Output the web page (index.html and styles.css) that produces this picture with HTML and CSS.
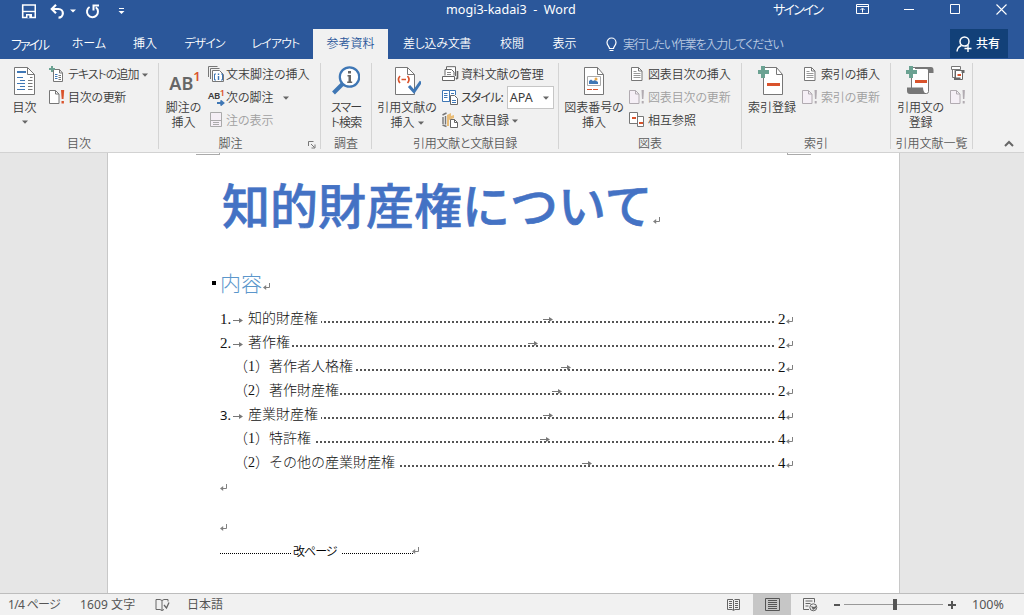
FILE: index.html
```
<!DOCTYPE html>
<html lang="ja">
<head>
<meta charset="utf-8">
<title>mogi3-kadai3 - Word</title>
<link rel="stylesheet" href="styles.css">
</head>
<body>
<svg class="defs" width="0" height="0">
  <symbol id="ret" viewBox="0 0 8 8"><path d="M6.500 0v4.500H2" fill="none" stroke="#808080"/><path d="M0 4.500L3.200 2v5z" fill="#808080"/></symbol>
  <symbol id="tab" viewBox="0 0 10 6"><path d="M0 2.500h7" stroke="#777" fill="none"/><path d="M6 0L10 2.500 6 5z" fill="#777"/></symbol>
  <symbol id="caret" viewBox="0 0 6 4"><path d="M0 .5h6L3 3.700z" fill="#666"/></symbol>
  <symbol id="update" viewBox="0 0 16 16"><path d="M.5 1.500h6l3.500 3.500v9.500H.5z" fill="#fff" stroke="#777"/><path d="M6.500 1.500V5H10" fill="none" stroke="#777"/><path d="M12 1h3.200l-.7 9h-1.800z" fill="#d9532c"/><path d="M12.500 12h2.400v2.500h-2.400z" fill="#d9532c"/></symbol>
  <symbol id="update-off" viewBox="0 0 16 16"><path d="M.5 1.500h6l3.500 3.500v9.500H.5z" fill="#f5eff6" stroke="#b1abb1"/><path d="M6.500 1.500V5H10" fill="none" stroke="#b1abb1"/><path d="M12.500 1h2.400l-.5 9h-1.400z" fill="#b1abb1"/><path d="M12.700 12h2v2.500h-2z" fill="#b1abb1"/></symbol>
  <symbol id="list" viewBox="0 0 16 16"><path d="M2.500 1.500h7l3.500 3.500v9.500H2.500z" fill="#fff" stroke="#777"/><path d="M9.500 1.500V5H13" fill="none" stroke="#777"/><path d="M4.500 5.500h3M4.500 7.500h7M4.500 9.500h7M4.500 11.500h7" fill="none" stroke="#999"/></symbol>
</svg>

<header class="top">
  <div class="titlebar">
    <div class="quick">
      <svg class="q-save" width="15" height="15"><path d="M1.700 1h12.600v12.500H1.700z" fill="none" stroke="#fff" stroke-width="1.600"/><path d="M2 7.500h12" stroke="#fff" stroke-width="1.400"/><path d="M5 10h6v4H5z" fill="#fff"/><path d="M6.500 11.500h1.800v2.500H6.500z" fill="#2b579a"/></svg>
      <svg class="q-undo" width="16" height="15"><path d="M2 5h6.500a4.300 4.300 0 0 1 0 8.700" fill="none" stroke="#fff" stroke-width="2.200"/><path d="M6 .8L1.800 5 6 9.200" fill="none" stroke="#fff" stroke-width="2.200"/></svg>
      <svg class="q-caret" width="6" height="4"><path d="M0 .5h6L3 3.500z" fill="#fff"/></svg>
      <svg class="q-redo" width="15" height="15"><path d="M4.600 3A5.500 5.500 0 1 0 10.800 3.300" fill="none" stroke="#fff" stroke-width="2"/><path d="M8.500 6.500V1.500H14" fill="none" stroke="#fff" stroke-width="2"/></svg>
      <svg class="q-more" width="7" height="8"><path d="M1 1.500h5" stroke="#fff"/><path d="M.5 4h6l-3 3z" fill="#fff"/></svg>
    </div>
    <div class="title">mogi3-kadai3&nbsp; -&nbsp; Word</div>
    <div class="signin">サインイン</div>
    <svg class="w-ribbon" width="13" height="11"><path d="M.5.5h12v9H.5zM.5 2.500h12M6.500 8.500v-4M4.500 6l2-2 2 2" fill="none" stroke="#fff"/></svg>
    <svg class="w-min" width="10" height="11"><path d="M0 5.500h10" stroke="#fff"/></svg>
    <svg class="w-max" width="10" height="11"><path d="M.5.5h9v9h-9z" fill="none" stroke="#fff"/></svg>
    <svg class="w-close" width="11" height="11"><path d="M.5.5l10 10M10.500.5l-10 10" stroke="#fff" stroke-width="1.100"/></svg>
  </div>
  <nav class="tabs">
    <span class="tight file">ファイル</span><span>ホーム</span><span>挿入</span><span class="tight">デザイン</span><span class="tight">レイアウト</span><span class="active">参考資料</span><span class="semi">差し込み文書</span><span>校閲</span><span>表示</span>
    <div class="tell"><svg width="11" height="16"><path d="M3.500 11.500c0-2-2.500-3-2.500-6a4.500 4.500 0 0 1 9 0c0 3-2.500 4-2.500 6zM3.500 13.500h4" fill="none" stroke="#fff" stroke-width="1.200"/></svg><span>実行したい作業を入力してください</span></div>
    <div class="share"><svg width="16" height="16"><circle cx="8.500" cy="5.500" r="4.500" fill="none" stroke="#fff" stroke-width="1.500"/><path d="M1 15.500c.3-3.500 2-5 4.500-6M9.500 9.500l1 1M8.500 12.500h7M12 9v7" fill="none" stroke="#fff" stroke-width="1.400"/></svg><span>共有</span></div>
  </nav>
</header>

<section class="ribbon">
  <div class="group g1">
    <div class="tools">
      <div class="big b1"><svg width="22" height="30"><path d="M.5 1.500h13l7 7V28.500H.5z" fill="#fff" stroke="#777"/><path d="M13.500 1.500v7h7" fill="none" stroke="#777"/><path d="M3 6h9" stroke="#3f77b5" stroke-width="2"/><path d="M3 11.500h6M6 14.500h5M3 17.500h8M6 20.500h5M3 23.500h8" stroke="#3f77b5"/><path d="M16 11.500h2.500M14 14.500h4.500M14 17.500h4.500M14 20.500h4.500M14 23.500h4.500" stroke="#777"/></svg><span>目次</span><svg class="caret" width="6" height="4"><use href="#caret"/></svg></div>
      <div class="smalls">
        <div class="row"><svg width="16" height="16"><path d="M4.500 3.500h6l3 3.500v8.500h-9z" fill="#fff" stroke="#777"/><path d="M10.500 3.500V7h3" fill="none" stroke="#777"/><path d="M6 8.500h2.500M6 10.500h2.500M6 12.500h2.500" stroke="#3f77b5"/><path d="M9.500 9.500H12M9.500 11.500H12M9.500 13.500H12" stroke="#777"/><path d="M2 0h2v2h2v2H4v2H2V4H0V2h2z" fill="#6ba292"/></svg><span class="add">テキストの追加</span><svg class="caret" width="6" height="4"><use href="#caret"/></svg></div>
        <div class="row"><svg width="16" height="16"><use href="#update"/></svg><span class="semi">目次の更新</span></div>
      </div>
    </div>
    <div class="name">目次</div>
  </div>
  <div class="group g2">
    <div class="tools">
      <div class="big b2"><div class="ab">AB<sup>1</sup></div><span>脚注の<br>挿入</span></div>
      <div class="smalls">
        <div class="row"><svg width="17" height="16"><path d="M.5 11V.5h9M2.500 13V2.500h9" fill="none" stroke="#777"/><path d="M4.500 4.500h7l4 4v7h-11z" fill="#fff" stroke="#777"/><path d="M8 8H6.500v6H8M13 8h1.500v6H13" fill="none" stroke="#3f77b5"/><path d="M10.500 7.500v1.500M10.500 10v4" stroke="#3f77b5" stroke-width="1.400"/></svg><span>文末脚注の挿入</span></div>
        <div class="row"><span class="ab2">AB<sup>1</sup><svg width="8" height="6"><path d="M0 3h6M3.500 .5L6.500 3 3.500 5.500" fill="none" stroke="#3f77b5" stroke-width="1.800"/></svg></span><span>次の脚注</span><svg class="caret far" width="6" height="4"><use href="#caret"/></svg></div>
        <div class="row off"><svg width="17" height="16"><path d="M2.500.5h11v14h-11z" fill="#f5eff6" stroke="#aaa"/><path d="M3 8.500h10M5 10.500h6M5 12.500h6" stroke="#aaa"/></svg><span>注の表示</span></div>
      </div>
    </div>
    <div class="name shift">脚注</div>
    <svg class="launcher" width="8" height="8"><path d="M.5 5V.5h5M3 3l3.500 3.500M7 3.500V7H3.500" fill="none" stroke="#777"/></svg>
  </div>
  <div class="group g3">
    <div class="tools">
      <div class="big b3"><svg width="28" height="30"><circle cx="17.500" cy="11" r="9.700" fill="#fff" stroke="#3f77b5" stroke-width="2.200"/><path d="M10.500 18L1.500 27" stroke="#3f77b5" stroke-width="4"/><path d="M16 5h3v2.500h-3zM15.500 9H19v6.500h1.200V17h-5v-1.500h1.300v-5h-1z" fill="#666"/></svg><span class="tight">スマー<br>ト検索</span></div>
    </div>
    <div class="name">調査</div>
  </div>
  <div class="group g4">
    <div class="tools">
      <div class="big b4"><svg width="28" height="30"><path d="M2.500 1.500h12l7 7V28.500h-19z" fill="#fff" stroke="#777"/><path d="M14.500 1.500v7h7" fill="none" stroke="#777"/><path d="M7 10q-3 3.500 0 7M14.500 10q3 3.500 0 7M8.500 13.500h4.500" fill="none" stroke="#d9532c" stroke-width="1.600"/><path d="M16 20l5 5.500L28 15.500" fill="none" stroke="#3f77b5" stroke-width="3"/></svg><span>引用文献の<br>挿入 <svg class="inline" width="6" height="4"><use href="#caret"/></svg></span></div>
      <div class="smalls">
        <div class="row"><svg width="17" height="16"><path d="M4.500 3V.7h9V10M3 9.500V3.500h6.500l2.500 2.500v3.500" fill="#fff" stroke="#666"/><path d="M5 6.500h4M5 8.500h4" stroke="#888"/><path d="M.5 10.500h12v4H.5z" fill="#fff" stroke="#666"/><path d="M14 13l1.500-1V5" fill="none" stroke="#666" stroke-width="1.600"/></svg><span class="slim">資料文献の管理</span></div>
        <div class="row"><svg width="17" height="16"><path d="M7.500 2.500V12.500H.5v-11H7zM7.500 12.500v-11h6V6" fill="#fff" stroke="#3f77b5"/><path d="M2 4.500h3.500M2 6.500h3.500M2 8.500h3.500M9 4.500h3" stroke="#3f77b5"/><path d="M8.500 6.500h4l3 3v6h-7z" fill="#fff" stroke="#666"/><path d="M10 11.500h4M10 13.500h4" stroke="#3f77b5"/></svg><span class="style">スタイル:</span><span class="select">APA<svg width="6" height="4"><use href="#caret"/></svg></span></div>
        <div class="row"><svg width="17" height="16"><path d="M.5 3L4.500 1M1 5v7M3.500 4v8.500M.5 13l4 1.500" fill="none" stroke="#777" stroke-width="1.400"/><path d="M5 3l4-2v3l3-1v3L7 8v6H5z" fill="#e9bd78"/><path d="M8.500 7.500h4l3 3v5h-7z" fill="#fff" stroke="#666"/><path d="M12.500 7.500v3h3" fill="none" stroke="#666"/></svg><span>文献目録</span><svg class="caret near" width="6" height="4"><use href="#caret"/></svg></div>
      </div>
    </div>
    <div class="name tightname">引用文献と文献目録</div>
  </div>
  <div class="group g5">
    <div class="tools">
      <div class="big b5"><svg width="22" height="30"><path d="M1.500 1.500h13l6 7V28.500h-19z" fill="#fff" stroke="#777"/><path d="M14.500 1.500v7h6" fill="none" stroke="#777"/><path d="M4.500 10.500h13v9h-13z" fill="none" stroke="#aaa"/><path d="M6 18v-3l2-1.500 2 1.500 2-1 3 2v2z" fill="#3f77b5"/><circle cx="13" cy="13" r="1.500" fill="#e9a94c"/><path d="M4 23.500h5M10 23.500h5" stroke="#d9532c"/></svg><span>図表番号の<br>挿入</span></div>
      <div class="smalls">
        <div class="row"><svg width="16" height="16"><use href="#list"/></svg><span class="slim">図表目次の挿入</span></div>
        <div class="row off"><svg width="16" height="16"><use href="#update-off"/></svg><span class="slim">図表目次の更新</span></div>
        <div class="row"><svg width="16" height="16"><path d="M.5.5h8v11h-8zM8.500 4.500h6v10h-6z" fill="#fff" stroke="#777"/><path d="M3 5h4v2H3zM10 10h4v2h-4z" fill="#d9532c"/></svg><span>相互参照</span></div>
      </div>
    </div>
    <div class="name">図表</div>
  </div>
  <div class="group g6">
    <div class="tools">
      <div class="big b6"><svg width="28" height="30"><path d="M5.500 1.500h13l6 7v20h-19z" fill="#fff" stroke="#777"/><path d="M18.500 1.500v7h6" fill="none" stroke="#777"/><path d="M4 0h4v4h4v4H8v4H4V8H0V4h4z" fill="#6ba292" transform="translate(-1 0)"/><path d="M9 17h13v3H9z" fill="#d9532c"/></svg><span>索引登録</span></div>
      <div class="smalls">
        <div class="row"><svg width="16" height="16"><use href="#list"/></svg><span class="slim">索引の挿入</span></div>
        <div class="row off"><svg width="16" height="16"><use href="#update-off"/></svg><span class="slim">索引の更新</span></div>
      </div>
    </div>
    <div class="name">索引</div>
  </div>
  <div class="group g7">
    <div class="tools">
      <div class="big b7"><svg width="30" height="30"><path d="M5.500 1.500h17v24q0 2-2 2h-15z" fill="#fff" stroke="#777"/><path d="M9 1h16q2.500 0 2.500 3v3H22V4q0-1-2-1H9zM1 21.500h16q0 4 3 6.500H4q-3 0-3-3z" fill="#777"/><path d="M4 0h4v4h4v4H8v4H4V8H0V4h4z" fill="#6ba292" transform="translate(-1 0)"/><path d="M9 14h12v3H9z" fill="#d9532c"/></svg><span class="semi">引用文の<br>登録</span></div>
      <div class="smalls">
        <div class="row"><svg width="16" height="16"><path d="M1.500.5h9v3h-9zM2.500 3.500v8H5v-8z" fill="#fff" stroke="#777"/><path d="M5.500 4.500h8v2h-1v7h-7z" fill="#fff" stroke="#666"/><path d="M4 11.500h6.500V14H4zM11.500 4h3v3h-3z" fill="#666"/><path d="M7.500 8h3.500v2H7.500z" fill="#d9532c"/></svg></div>
        <div class="row off"><svg width="16" height="16"><use href="#update-off"/></svg></div>
      </div>
    </div>
    <div class="name">引用文献一覧</div>
  </div>
  <div class="collapse"><svg width="10" height="7"><path d="M1 6l4-4 4 4" fill="none" stroke="#666" stroke-width="2"/></svg></div>
</section>

<main class="desk">
  <article class="page">
    <div class="margins"><i class="left"></i><i class="right"></i></div>
    <h1>知的財産権について<svg width="8" height="8"><use href="#ret"/></svg></h1>
    <h2><i class="bullet"></i>内容<svg width="8" height="8"><use href="#ret"/></svg></h2>
    <div class="toc">
      <div class="entry"><span class="num">1.<svg width="10" height="6"><use href="#tab"/></svg></span><span class="txt gap">知的財産権</span><span class="dots"><svg width="10" height="6"><use href="#tab"/></svg></span><b>2</b><svg class="end" width="8" height="8"><use href="#ret"/></svg></div>
      <div class="entry"><span class="num">2.<svg width="10" height="6"><use href="#tab"/></svg></span><span class="txt">著作権</span><span class="dots"><svg width="10" height="6"><use href="#tab"/></svg></span><b>2</b><svg class="end" width="8" height="8"><use href="#ret"/></svg></div>
      <div class="entry"><span class="sub">（1）</span><span class="txt gap">著作者人格権</span><span class="dots"><svg width="10" height="6"><use href="#tab"/></svg></span><b>2</b><svg class="end" width="8" height="8"><use href="#ret"/></svg></div>
      <div class="entry"><span class="sub">（2）</span><span class="txt">著作財産権</span><span class="dots"><svg width="10" height="6"><use href="#tab"/></svg></span><b>2</b><svg class="end" width="8" height="8"><use href="#ret"/></svg></div>
      <div class="entry"><span class="num sans">3.<svg width="10" height="6"><use href="#tab"/></svg></span><span class="txt gap">産業財産権</span><span class="dots"><svg width="10" height="6"><use href="#tab"/></svg></span><b>4</b><svg class="end" width="8" height="8"><use href="#ret"/></svg></div>
      <div class="entry"><span class="sub">（1）</span><span class="txt gap">特許権</span><span class="dots"><svg width="10" height="6"><use href="#tab"/></svg></span><b>4</b><svg class="end" width="8" height="8"><use href="#ret"/></svg></div>
      <div class="entry"><span class="sub">（2）</span><span class="txt gap">その他の産業財産権</span><span class="dots"><svg width="10" height="6"><use href="#tab"/></svg></span><b>4</b><svg class="end" width="8" height="8"><use href="#ret"/></svg></div>
    </div>
    <div class="blank"><svg width="8" height="8"><use href="#ret"/></svg></div>
    <div class="blank last"><svg width="8" height="8"><use href="#ret"/></svg></div>
    <div class="break"><i></i><span>改ページ</span><i></i><svg width="8" height="8"><use href="#ret"/></svg></div>
  </article>
</main>

<footer class="status">
  <span class="s-page">1/4 ページ</span>
  <span class="s-count">1609 文字</span>
  <svg class="s-proof" width="15" height="13"><path d="M7 2.500L5 1.500H1v10h4l2 1 2-1M7 2.500v10M7 2.500l2-1h4v2" fill="none" stroke="#666"/><path d="M9 7l2.500 3L14 4.500" fill="none" stroke="#666" stroke-width="1.300"/></svg>
  <span class="s-lang">日本語</span>
  <div class="views">
    <span class="v1"><svg width="13" height="13"><path d="M6.500 2v10M6 1.500H.5v10H5l1.500 1 1.500-1h4.500v-10H7.500" fill="none" stroke="#666"/><path d="M2 3.500h3M2 5.500h3M2 7.500h3M2 9.500h3M8 3.500h3M8 5.500h3M8 7.500h3M8 9.500h3" stroke="#666"/></svg></span>
    <span class="v2"><svg width="15" height="14"><path d="M.5.5h14v12H.5zM3 2.500h9M3 4.500h9M3 6.500h9M3 8.500h9M3 10.500h9" fill="none" stroke="#555"/></svg></span>
    <span class="v3"><svg width="15" height="14"><path d="M6 11.500H.5V.5h11v4" fill="none" stroke="#666"/><path d="M2.500 3h7M2.500 5.500h5M2.500 8h3" stroke="#666"/><circle cx="10.300" cy="9.300" r="3.500" fill="#eee" stroke="#666"/><path d="M8 8l3 1 2-1v2l-3 2z" fill="#666"/></svg></span>
  </div>
  <svg class="zoom" width="125" height="13"><path d="M1 6h6v2H1zM115 6h8v2h-8zM118 3h2v8h-2z" fill="#555"/><path d="M11 6.500h99" stroke="#999"/><path d="M60 1h4v11h-4z" fill="#555"/></svg>
  <span class="pct">100%</span>
</footer>
</body>
</html>
```
FILE: styles.css
```
* { box-sizing: border-box; }
body {
  margin: 0;
  width: 1024px;
  height: 615px;
  overflow: hidden;
  display: flex;
  flex-direction: column;
  font: 350 12px/15px "Noto Sans", "Noto Sans CJK JP", sans-serif;
  font-feature-settings: "palt";
  color: #3c3c3c;
  background: #e6e6e6;
}
svg { display: block; flex: none; }
.defs { position: absolute; }
i { font-style: normal; }
.tight { letter-spacing: -0.9px; }
.semi { letter-spacing: -0.3px; }
.slim { letter-spacing: -0.15px; }
.add { letter-spacing: -1px; }
.style { letter-spacing: -0.9px; font-weight: 400; }

.top { height: 59px; background: #2b579a; color: #fff; flex: none; }
.titlebar { height: 29px; display: grid; grid-template-columns: 446px 327px 83px 47px 47px 47px 1fr; align-items: center; padding-bottom: 10px; white-space: nowrap; }
.quick { display: flex; align-items: center; padding-left: 21px; padding-top: 3px; }
.q-undo { margin-left: 14px; }
.q-caret { margin-left: 4px; }
.q-redo { margin-left: 9px; }
.q-more { margin-left: 18px; }
.title { font-size: 12.600px; font-weight: 400; }
.signin { letter-spacing: -1.800px; font-size: 13px; }
.w-min { margin-left: 1px; }
.w-close { margin-left: -1px; }
.tabs { height: 30px; display: grid; grid-template-columns: 59px 60px 52px 67px 75px 75px 98px 52px 53px 359px 58px; line-height: 30px; white-space: nowrap; }
.tabs > span { text-align: center; }
.tabs .file { letter-spacing: -2px; font-size: 13px; line-height: 31px; }
.tabs .active { background: #f1f1f1; color: #2b579a; }
.tell { display: flex; align-items: center; gap: 6px; padding-left: 15px; color: #b8c8e0; letter-spacing: -1.200px; }
.share { height: 29px; background: #124078; display: flex; align-items: center; gap: 4px; padding-left: 6px; font-weight: 500; }

.ribbon { height: 94px; flex: none; background: #f1f1f1; border-bottom: 1px solid #d2d2d2; display: grid; grid-template-columns: 159px 162px 51px 187px 183px 149px 82px 1fr; padding-top: 4px; }
.group { height: 86px; border-right: 1px solid #d4d4d4; display: flex; flex-direction: column; position: relative; white-space: nowrap; }
.tools { height: 73px; display: flex; }
.name { text-align: center; line-height: 15px; color: #5c5c5c; height: 13px; }
.name.shift { padding-right: 18px; }
.tightname { letter-spacing: -0.3px; }
.big { display: flex; flex-direction: column; align-items: center; padding-top: 3px; text-align: center; flex: none; }
.big > svg:first-child { margin-bottom: 4px; }
.big .caret { margin-top: 5px; }
.big .inline { display: inline-block; vertical-align: 2px; }
.smalls { display: flex; flex-direction: column; }
.row { height: 23px; display: flex; align-items: center; gap: 3px; }
.row > svg:first-child { margin-top: -1px; }
.row.off { color: #a0a0a0; }
.row .caret { margin-left: 1px; }
.row .caret.far { margin-left: 8px; }
.row .caret.near { margin-left: 1px; }
.b1 { width: 49px; }
.b2 { width: 49px; }
.b3 { width: 50px; }
.b4 { width: 70px; }
.b5 { width: 70px; }
.b6 { width: 60px; }
.b7 { width: 59px; }
.g2 .row { gap: 1px; }
.g4 .row { gap: 2px; }
.ab { height: 34px; padding: 8px 0 0 3px; font: 600 18px/18px "Noto Sans", sans-serif; color: #666; }
.ab sup { font-size: 13px; line-height: 0; vertical-align: 9px; color: #d9532c; }
.ab2 { width: 17px; position: relative; font: 600 9.500px/12px "Noto Sans", sans-serif; height: 16px; letter-spacing: -0.5px; }
.ab2 sup { font-size: 9px; line-height: 0; vertical-align: 3px; color: #d9532c; }
.ab2 svg { position: absolute; right: 0; bottom: 0; }
.launcher { position: absolute; right: 4px; bottom: 0; }
.select { width: 47px; height: 23px; margin-left: 2px; border: 1px solid #c6c6c6; background: #fff; display: flex; align-items: center; justify-content: space-between; padding: 0 4px 0 2px; font-size: 12.500px; font-weight: 400; }
.collapse { display: flex; align-items: flex-end; padding: 0 0 5px 31px; }

.desk { height: 440px; flex: none; padding-left: 107px; }
.page { width: 793px; height: 440px; background: #fff; border: solid #c8c8c8; border-width: 0 1px; padding-left: 112px; font-feature-settings: normal; }
.margins { height: 2px; display: flex; gap: 567px; margin-left: -24px; }
.margins i { width: 24px; border-bottom: 1px solid #aaa; }
.margins .left { border-right: 1px solid #aaa; }
.margins .right { border-left: 1px solid #aaa; }
h1 { margin: 0; padding: 12px 0 0 2px; height: 104px; font: 500 48px/72px "Noto Sans CJK JP", sans-serif; -webkit-text-stroke: 0.600px #4472c4; color: #4472c4; display: flex; }
h1 svg { margin: 50px 0 0 0; }
h2 { margin: 0 0 0 -8px; height: 48px; font: 300 21px/46px "Noto Sans CJK JP", sans-serif; color: #5b96cb; display: flex; align-items: flex-start; }
.bullet { width: 4px; height: 4px; background: #000; margin: 22px 4px 0 0; }
h2 svg { margin: 24px 0 0 1px; }
.entry { width: 573px; height: 24px; display: flex; align-items: center; font: 300 14px/24px "Liberation Serif", "Noto Sans CJK JP", serif; color: #111; }
.num { width: 28px; display: flex; align-items: center; gap: 2px; font-size: 15px; }
.num.sans { font-family: "Noto Sans", sans-serif; font-size: 13px; font-weight: 400; }
.num svg { margin-top: 3px; }
.sub { width: 49px; padding-left: 14px; white-space: nowrap; }
.txt { white-space: nowrap; }
.gap { margin-right: 3px; }
.dots { flex: 1; height: 6px; margin-top: 4px; display: flex; justify-content: center; background: repeating-linear-gradient(to left, transparent 0 1px, #555 1px 3px, transparent 3px 4px) right 3px / 100% 2px no-repeat; }
.dots svg { margin-top: -1px; }
.entry b { font-weight: 400; font-size: 15px; width: 11px; padding-left: 3px; }
.end { margin: 4px -1px 0 0; }
.blank { height: 40px; padding-top: 9px; }
.blank.last { height: 28px; }
.break { display: flex; align-items: center; height: 20px; color: #000; margin-top: -2px; font-feature-settings: "palt"; letter-spacing: -1px; }
.break i { width: 71px; margin-top: 4px; border-top: 1px dotted #000; }
.break span { width: 51px; padding-left: 2px; }
.break svg { margin-left: -1px; }

.status { height: 22px; flex: none; background: #f1f1f1; border-top: 1px solid #bdbdbd; display: grid; grid-template-columns: 72px 75px 32px 528px 123px 135px 1fr; padding-left: 8px; align-items: center; white-space: nowrap; color: #555; font-weight: 400; }
.s-page { letter-spacing: -0.700px; }
.s-count { letter-spacing: 0.100px; }
.views { display: flex; align-self: stretch; }
.views span { display: flex; align-items: center; justify-content: center; width: 38px; }
.views .v1 svg { margin-left: -2px; }
.zoom { margin-left: -5px; }
.pct { font-size: 12.500px; margin-left: -1px; }
.v2 { background: #c6c6c6; }
```
